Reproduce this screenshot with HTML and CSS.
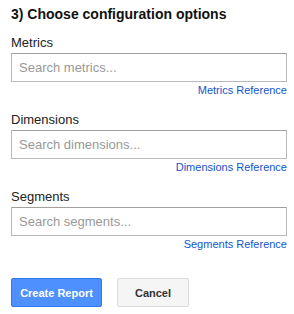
FILE: index.html
```html
<!DOCTYPE html>
<html>
<head>
<meta charset="utf-8">
<link rel="stylesheet" href="styles.css">
</head>
<body>
<div class="panel">
  <h3 class="title">3) Choose configuration options</h3>
  <div class="field">
    <div class="label">Metrics</div>
    <div class="input">Search metrics...</div>
    <div class="ref"><a href="#">Metrics Reference</a></div>
  </div>
  <div class="field">
    <div class="label">Dimensions</div>
    <div class="input">Search dimensions...</div>
    <div class="ref"><a href="#">Dimensions Reference</a></div>
  </div>
  <div class="field">
    <div class="label">Segments</div>
    <div class="input">Search segments...</div>
    <div class="ref"><a href="#">Segments Reference</a></div>
  </div>
  <div class="actions">
    <button class="btn primary">Create Report</button>
    <button class="btn">Cancel</button>
  </div>
</div>
</body>
</html>
```

FILE: styles.css
```css
html, body {
  margin: 0;
  padding: 0;
  background: #fff;
}
body {
  font-family: "Liberation Sans", Arial, sans-serif;
  color: #222;
}
.panel {
  width: 276px;
  padding: 5px 0 0 11px;
}
.title {
  margin: 0 0 12px 0;
  font-size: 14px;
  line-height: 18px;
  font-weight: bold;
  color: #111;
}
.field {
  margin-bottom: 15px;
}
.label {
  font-size: 13px;
  line-height: 15px;
  margin-bottom: 3px;
  color: #222;
}
.input {
  box-sizing: border-box;
  height: 29px;
  border: 1px solid #b9b9b9;
  border-top-color: #a0a0a0;
  padding: 0 7px;
  font-size: 13px;
  line-height: 27px;
  color: #999;
}
.ref {
  text-align: right;
  font-size: 11px;
  line-height: 14px;
  margin-top: 1px;
}
.ref a {
  color: #1155cc;
  text-decoration: none;
}
.actions {
  display: flex;
  gap: 15px;
  padding-top: 12px;
}
.btn {
  box-sizing: border-box;
  height: 29px;
  width: 72px;
  padding: 0;
  white-space: nowrap;
  font-family: "Liberation Sans", Arial, sans-serif;
  font-size: 11px;
  font-weight: bold;
  border-radius: 2px;
  border: 1px solid #dcdcdc;
  background: #f5f5f5;
  color: #333;
}
.btn.primary {
  width: 91px;
  background: #4d90fe;
  border-color: #3079ed;
  color: #fff;
}
```
